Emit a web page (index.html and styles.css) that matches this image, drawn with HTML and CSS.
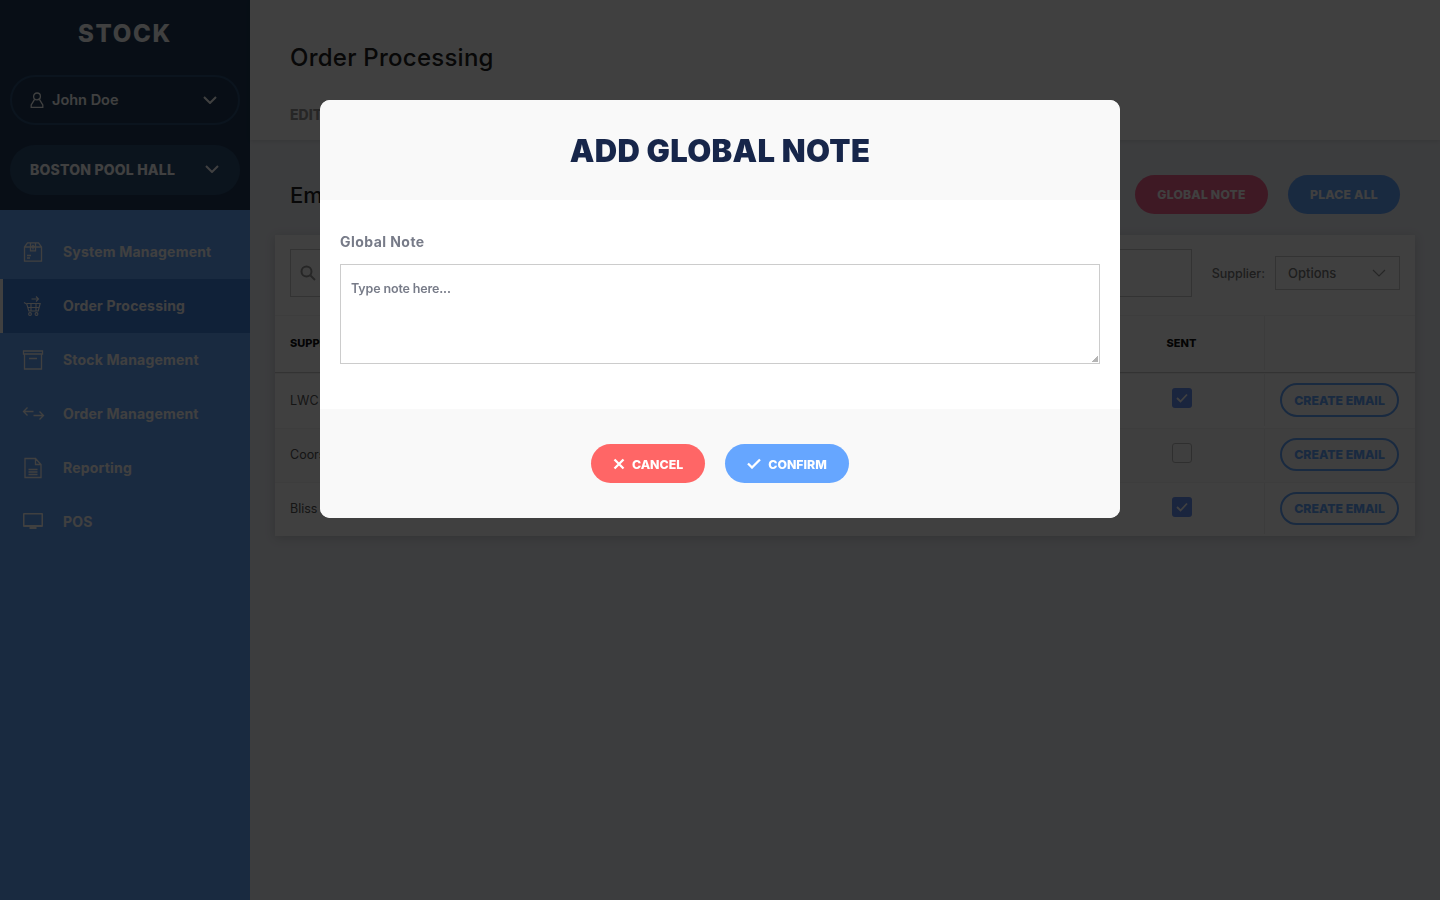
FILE: index.html
```html
<!DOCTYPE html>
<html lang="en">
<head>
  <meta charset="UTF-8">
  <title>Order Processing</title>
  <link rel="stylesheet" href="styles.css">
</head>
<body>
  <div class="app">
    <aside class="sidebar">
      <div class="sidebar-top">
        <div class="logo">STOCK</div>
        <div class="pill user-pill">
          <svg class="user-icon" viewBox="0 0 14 16" width="14" height="16"><circle cx="7" cy="4.400" r="3.400"/><path d="M4.600 7.400 1.200 13v2.300h11.600V13L9.400 7.400"/></svg>
          <span class="user-name">John Doe</span>
          <svg class="chevron" viewBox="0 0 14 8" width="14" height="8"><path d="M1 1l6 6 6-6"/></svg>
        </div>
        <div class="pill venue-pill">
          <span class="venue-name">BOSTON POOL HALL</span>
          <svg class="chevron" viewBox="0 0 14 8" width="14" height="8"><path d="M1 1l6 6 6-6"/></svg>
        </div>
      </div>
      <nav class="nav">
        <a class="nav-item">
          <svg class="nav-icon" viewBox="0 0 20 20"><path d="M4.500.8h11l3 4.200v14.200H1.500V5zM1.500 5h17M7.500.8v8h5v-8"/><path d="M10 7.500V3.500M8.500 5 10 3.500 11.500 5M4 13.500h4M4 16h3"/></svg>
          <span>System Management</span>
        </a>
        <a class="nav-item active">
          <svg class="nav-icon cart" viewBox="0 0 20 20"><path d="M1 6.500l2.800 1.500 2 7h9.400l2-7.500H3.800M8 8v7M13 8v7M4.800 11.500h11.400"/><circle cx="7" cy="18" r="1.400"/><circle cx="13.500" cy="18" r="1.400"/><path d="M8.500 3h7M13 .5 15.500 3 13 5.500"/></svg>
          <span>Order Processing</span>
        </a>
        <a class="nav-item">
          <svg class="nav-icon" viewBox="0 0 20 20"><path d="M.5 1h19v3H.5zM1.500 4v15h17V4M6 8.500h8"/></svg>
          <span>Stock Management</span>
        </a>
        <a class="nav-item">
          <svg class="nav-icon" viewBox="0 0 20 20"><path d="M10.500 8.500H.5M4.500 4.500l-4 4 4 4M10.500 12.500h10M16.500 8.500l4 4-4 4" transform="translate(0 -1)"/></svg>
          <span>Order Management</span>
        </a>
        <a class="nav-item">
          <svg class="nav-icon" viewBox="0 0 20 20"><path d="M2 .5h10.500l5.500 6V19.500H2zM12.500.5v6H18M5.500 11.500h9M5.500 14h9M5.500 16.500h9"/></svg>
          <span>Reporting</span>
        </a>
        <a class="nav-item">
          <svg class="nav-icon" viewBox="0 0 20 20"><path class="solid" d="M1 1h18a1 1 0 0 1 1 1v12a1 1 0 0 1-1 1H1a1 1 0 0 1-1-1V2a1 1 0 0 1 1-1zM1.500 2.500V13h17V2.500zM6.500 15h7v2h-7z"/></svg>
          <span>POS</span>
        </a>
      </nav>
    </aside>

    <main class="main">
      <header class="page-header">
        <h1 class="page-title">Order Processing</h1>
        <div class="tabs"><span class="tab">EDIT ORDERS</span></div>
      </header>
      <section class="content">
        <div class="section-head">
          <h2 class="section-title">Emails</h2>
          <div class="section-actions">
            <button class="btn-solid btn-pink">GLOBAL NOTE</button>
            <button class="btn-solid btn-blue">PLACE ALL</button>
          </div>
        </div>
        <div class="card">
          <div class="toolbar">
            <div class="search">
              <svg class="search-icon" viewBox="0 0 16 16" width="16" height="16"><circle cx="6.500" cy="6.500" r="5"/><path d="M10.500 10.500 15 15"/></svg>
            </div>
            <label class="supplier-label">Supplier:</label>
            <div class="select">
              <span>Options</span>
              <svg class="select-arrow" viewBox="0 0 14 8" width="14" height="8"><path d="M1 1l6 6 6-6"/></svg>
            </div>
          </div>
          <div class="row head-row">
            <div class="cell-supplier">SUPPLIER</div>
            <div class="cell-sent">SENT</div>
            <div class="cell-action"></div>
          </div>
          <div class="row row-a">
            <div class="cell-supplier">LWC</div>
            <div class="cell-sent"><span class="check on"><svg viewBox="0 0 12 10" width="12" height="10"><path d="M1 5l3.500 3.500L11 1.500"/></svg></span></div>
            <div class="cell-action"><button class="btn-outline">CREATE EMAIL</button></div>
          </div>
          <div class="row row-b">
            <div class="cell-supplier">Coors</div>
            <div class="cell-sent"><span class="check"></span></div>
            <div class="cell-action"><button class="btn-outline">CREATE EMAIL</button></div>
          </div>
          <div class="row row-c">
            <div class="cell-supplier">Bliss</div>
            <div class="cell-sent"><span class="check on"><svg viewBox="0 0 12 10" width="12" height="10"><path d="M1 5l3.500 3.500L11 1.500"/></svg></span></div>
            <div class="cell-action"><button class="btn-outline">CREATE EMAIL</button></div>
          </div>
        </div>
      </section>
    </main>
  </div>

  <div class="overlay">
    <div class="modal">
      <div class="modal-head"><h3 class="modal-title">ADD GLOBAL NOTE</h3></div>
      <div class="modal-body">
        <label class="field-label" for="note">Global Note</label>
        <textarea class="note" id="note" placeholder="Type note here..."></textarea>
      </div>
      <div class="modal-foot">
        <button class="btn-modal btn-cancel">
          <svg viewBox="0 0 12 12" width="12" height="12"><path d="M1.500 1.500l9 9M10.500 1.500l-9 9"/></svg>
          <span>CANCEL</span>
        </button>
        <button class="btn-modal btn-confirm">
          <svg viewBox="0 0 14 11" width="14" height="11"><path d="M1 5.500 5 9.500 13 1.500"/></svg>
          <span>CONFIRM</span>
        </button>
      </div>
    </div>
  </div>
</body>
</html>
```

FILE: styles.css
```css
* {
  box-sizing: border-box;
}
html, body {
  height: 100%;
}
body {
  margin: 0;
  font-family: Inter, "Liberation Sans", sans-serif;
  background: #eef1f6;
  color: #333;
  overflow: hidden;
}
.app {
  display: flex;
  height: 900px;
}
svg {
  fill: none;
  stroke: currentColor;
  flex: none;
}

/* sidebar */
.sidebar {
  width: 250px;
  flex: none;
  background: #66a6ff;
  color: #fff;
}
.sidebar-top {
  height: 210px;
  background: #203b58;
  padding: 20px 10px 0;
}
.logo {
  text-align: center;
  font-size: 24px;
  line-height: 28px;
  font-weight: 800;
  letter-spacing: 1.700px;
}
.pill {
  display: flex;
  align-items: center;
  width: 230px;
  border-radius: 25px;
}
.user-pill {
  height: 50px;
  margin-top: 27px;
  padding: 0 21px 0 18px;
  border: 2px solid #2e5078;
}
.user-icon {
  stroke-width: 1.300;
}
.user-name {
  margin-left: 8px;
  font-size: 14.500px;
  line-height: 16px;
  padding-bottom: 1px;
  font-weight: 600;
  flex: 1;
}
.chevron {
  stroke-width: 2;
}
.venue-pill {
  height: 50px;
  margin-top: 20px;
  padding: 0 21px 2px 20px;
  background: #2e4f76;
}
.venue-name {
  flex: 1;
  font-size: 14px;
  font-weight: 800;
  letter-spacing: 0.200px;
}
.nav {
  padding-top: 15px;
}
.nav-item {
  display: flex;
  align-items: center;
  height: 54px;
  padding-left: 23px;
  font-size: 14px;
  font-weight: 700;
  letter-spacing: 0.200px;
}
.nav-item span {
  padding-bottom: 2px;
}
.nav-item.active {
  background: #4182e0;
  box-shadow: inset 3px 0 0 #fff;
}
.nav-icon {
  width: 20px;
  height: 20px;
  margin-right: 20px;
  stroke-width: 1.300;
  overflow: visible;
}
.nav-icon.cart {
  stroke-width: 1.100;
}
.nav-icon .solid {
  fill: currentColor;
  fill-rule: evenodd;
  stroke: none;
}

/* main */
.main {
  flex: 1;
  min-width: 0;
}
.page-header {
  height: 140px;
  background: #fff;
  padding: 40px 40px 0;
  box-shadow: 0 1px 4px rgba(0, 0, 0, 0.1);
}
.page-title {
  margin: 0;
  font-size: 24px;
  line-height: 36px;
  font-weight: 500;
  color: #222;
  letter-spacing: 0.250px;
}
.tabs {
  margin-top: 28px;
}
.tab {
  font-size: 14px;
  font-weight: 800;
  color: #999;
}
.content {
  padding: 35px 25px 0;
}
.section-head {
  display: flex;
  justify-content: space-between;
  align-items: center;
  height: 39px;
  padding: 0 15px;
}
.section-title {
  margin: 0;
  font-size: 22px;
  font-weight: 500;
  color: #222;
}
.section-actions {
  display: flex;
  gap: 20px;
}
button {
  font-family: inherit;
  border: none;
  cursor: pointer;
}
.btn-solid {
  height: 39px;
  border-radius: 20px;
  color: #fff;
  font-size: 12.200px;
  font-weight: 800;
  letter-spacing: 0.200px;
  padding: 0;
}
.btn-pink {
  width: 133px;
  background: #f7648f;
}
.btn-blue {
  width: 112px;
  background: #66a6ff;
}
.card {
  margin-top: 21px;
  background: #fff;
  box-shadow: 0 2px 10px rgba(0, 0, 0, 0.15);
}
.toolbar {
  display: flex;
  align-items: center;
  height: 80px;
  padding: 0 15px 4px;
}
.search {
  display: flex;
  align-items: center;
  flex: 1;
  height: 48px;
  padding-left: 9px;
  border: 1px solid #ccc;
}
.search-icon {
  color: #999;
  stroke-width: 2;
}
.supplier-label {
  margin-left: 20px;
  font-size: 12.500px;
  font-weight: 500;
  color: #777;
}
.select {
  display: flex;
  justify-content: space-between;
  align-items: center;
  width: 125px;
  height: 34px;
  margin-left: 10px;
  padding: 0 13px 0 12px;
  border: 1px solid #ccc;
  font-size: 13px;
  font-weight: 500;
  color: #777;
}
.select-arrow {
  stroke-width: 1.200;
  color: #999;
}
.row {
  display: flex;
  align-items: center;
  font-size: 12.500px;
  color: #555;
  border-top: 1px solid #f4f4f4;
  padding-bottom: 2px;
}
.head-row {
  height: 58px;
  font-size: 11px;
  font-weight: 800;
  color: #111;
  border-bottom: 1px solid #ccc;
}
.row-a { height: 55px; }
.row-b { height: 54px; background: #fafafa; }
.row-c { height: 54px; }
.cell-supplier {
  flex: 1;
  padding-left: 15px;
}
.cell-sent {
  width: 131px;
  margin-right: 17px;
  display: flex;
  justify-content: center;
}
.cell-action {
  align-self: stretch;
  display: flex;
  align-items: center;
  width: 151px;
  padding-left: 15px;
  border-left: 1px solid #f0f0f0;
}
.check {
  display: flex;
  align-items: center;
  justify-content: center;
  width: 20px;
  height: 20px;
  margin-bottom: 3px;
  border: 1px solid #bbb;
  border-radius: 3px;
}
.row-a .check {
  margin-bottom: 5px;
}
.check.on {
  border: none;
  background: #6a92f5;
  color: #fff;
}
.check svg {
  stroke-width: 1.800;
}
.btn-outline {
  width: 119px;
  height: 33px;
  background: none;
  border: 2px solid #66a6ff;
  border-radius: 17px;
  color: #66a6ff;
  font-size: 12.300px;
  font-weight: 800;
  padding: 0;
}
.row-a .btn-outline {
  height: 34px;
}

/* modal */
.overlay {
  position: fixed;
  inset: 0;
  display: flex;
  justify-content: center;
  align-items: flex-start;
  padding-top: 100px;
  background: rgba(0, 0, 0, 0.75);
}
.modal {
  width: 800px;
  border-radius: 10px;
  overflow: hidden;
  background: #fff;
}
.modal-head {
  height: 100px;
  background: #f9f9f9;
  display: flex;
  align-items: center;
  justify-content: center;
}
.modal-title {
  margin: 0;
  font-size: 31px;
  font-weight: 900;
  color: #17264a;
  letter-spacing: 0.300px;
}
.modal-body {
  height: 209px;
  padding: 33px 20px 0;
}
.field-label {
  display: block;
  font-size: 14px;
  line-height: 18px;
  font-weight: 700;
  color: #777b88;
  letter-spacing: 0.450px;
}
.note {
  display: block;
  width: 760px;
  height: 100px;
  margin-top: 13px;
  padding: 16px 10px;
  border: 1px solid #ccc;
  border-radius: 0;
  font-family: inherit;
  font-size: 12.500px;
  line-height: 16px;
  font-weight: 600;
  letter-spacing: -0.150px;
  outline: none;
  resize: none;
  background: linear-gradient(135deg, transparent 50%, #b5b5b5 50%) no-repeat right 1px bottom 1px / 6px 6px;
}
.note::placeholder {
  color: #777b88;
  opacity: 1;
}
.modal-foot {
  height: 109px;
  background: #f9f9f9;
  display: flex;
  justify-content: center;
  gap: 20px;
  padding-top: 35px;
}
.btn-modal {
  display: flex;
  align-items: center;
  justify-content: center;
  height: 39px;
  border-radius: 20px;
  color: #fff;
  font-size: 12.300px;
  font-weight: 800;
  padding: 0;
}
.btn-modal span {
  padding-top: 2px;
}
.btn-modal svg {
  stroke-width: 2.300;
  margin-right: 7px;
}
.btn-cancel {
  width: 114px;
  background: #ff6666;
}
.btn-confirm {
  width: 124px;
  background: #66a6ff;
}
```
